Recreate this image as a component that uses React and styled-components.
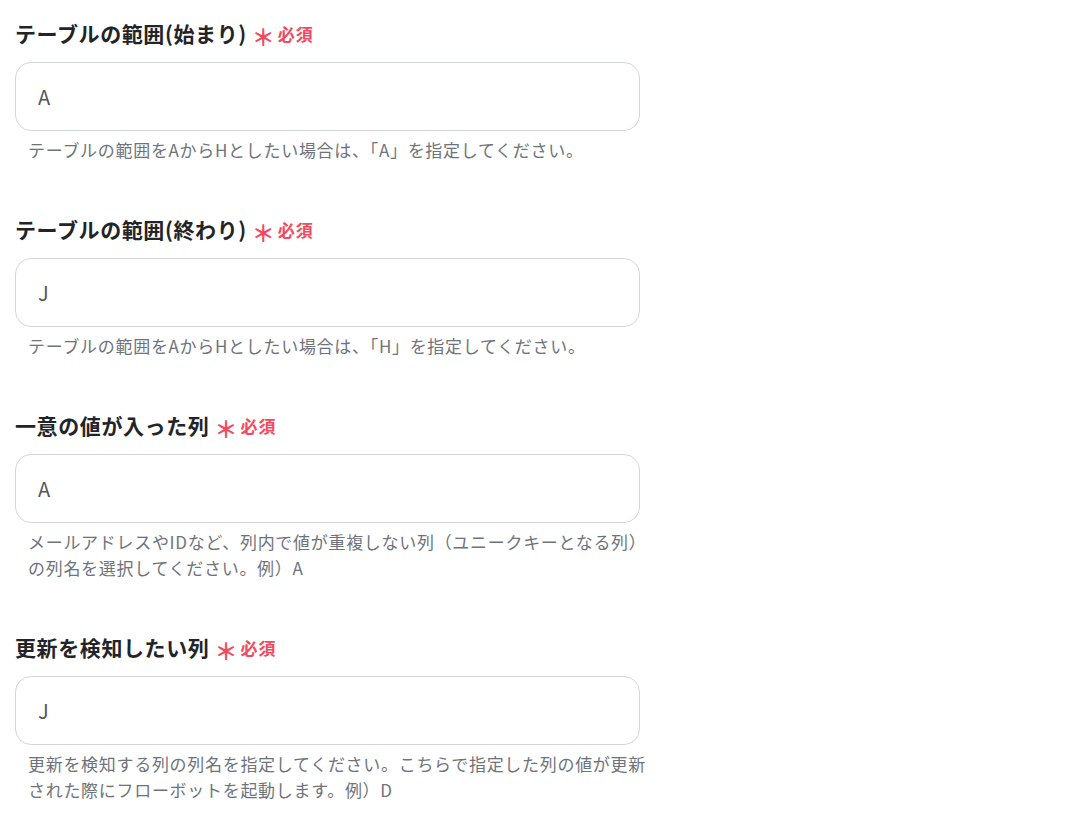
import React from 'react';
import styled, { createGlobalStyle } from 'styled-components';

const GlobalStyle = createGlobalStyle`
  body {
    margin: 0;
    background: #ffffff;
    font-family: "Noto Sans CJK JP", "Noto Sans", sans-serif;
  }
`;

const Form = styled.div`
  width: 625px;
  padding: 18px 0 0 15px;
  display: flex;
  flex-direction: column;
  gap: 51px;
`;

const Field = styled.div`
  display: flex;
  flex-direction: column;
`;

const Label = styled.div`
  display: flex;
  align-items: center;
  height: 30px;
  font-size: 21px;
  font-weight: 700;
  color: #222428;
  letter-spacing: 0.6px;
  white-space: nowrap;
`;

const Required = styled.span`
  display: inline-flex;
  align-items: center;
  margin-left: 5px;
  color: #f2495f;
  font-size: 17px;
  font-weight: 700;
  letter-spacing: 1px;
`;

const Star = styled.span`
  font-size: 23px;
  line-height: 1;
  margin-right: 2px;
  position: relative;
  top: 3px;
`;

const Input = styled.input`
  box-sizing: border-box;
  margin-top: 14px;
  width: 625px;
  height: 69px;
  border: 1px solid #d3d6dc;
  border-radius: 16px;
  padding: 0 22px;
  font-family: inherit;
  font-size: 20px;
  color: #55585e;
  background: #fff;
  outline: none;
`;

const Help = styled.p`
  margin: 6px 0 0;
  padding-left: 13px;
  font-size: 17px;
  line-height: 26px;
  color: #6e737b;
  letter-spacing: 0.7px;
  white-space: nowrap;
`;

const fields = [
  {
    label: 'テーブルの範囲(始まり)',
    value: 'A',
    help: ['テーブルの範囲をAからHとしたい場合は、「A」を指定してください。'],
  },
  {
    label: 'テーブルの範囲(終わり)',
    value: 'J',
    help: ['テーブルの範囲をAからHとしたい場合は、「H」を指定してください。'],
  },
  {
    label: '一意の値が入った列',
    value: 'A',
    help: [
      'メールアドレスやIDなど、列内で値が重複しない列（ユニークキーとなる列）',
      'の列名を選択してください。例）A',
    ],
  },
  {
    label: '更新を検知したい列',
    value: 'J',
    help: [
      '更新を検知する列の列名を指定してください。こちらで指定した列の値が更新',
      'された際にフローボットを起動します。例）D',
    ],
  },
];

export default function App() {
  return (
    <>
      <GlobalStyle />
      <Form>
        {fields.map(f => (
          <Field key={f.label}>
            <Label>
              {f.label}
              <Required>
                <Star>＊</Star>必須
              </Required>
            </Label>
            <Input defaultValue={f.value} readOnly />
            <Help>
              {f.help.map((line, i) => (
                <React.Fragment key={i}>
                  {i > 0 && <br />}
                  {line}
                </React.Fragment>
              ))}
            </Help>
          </Field>
        ))}
      </Form>
    </>
  );
}
